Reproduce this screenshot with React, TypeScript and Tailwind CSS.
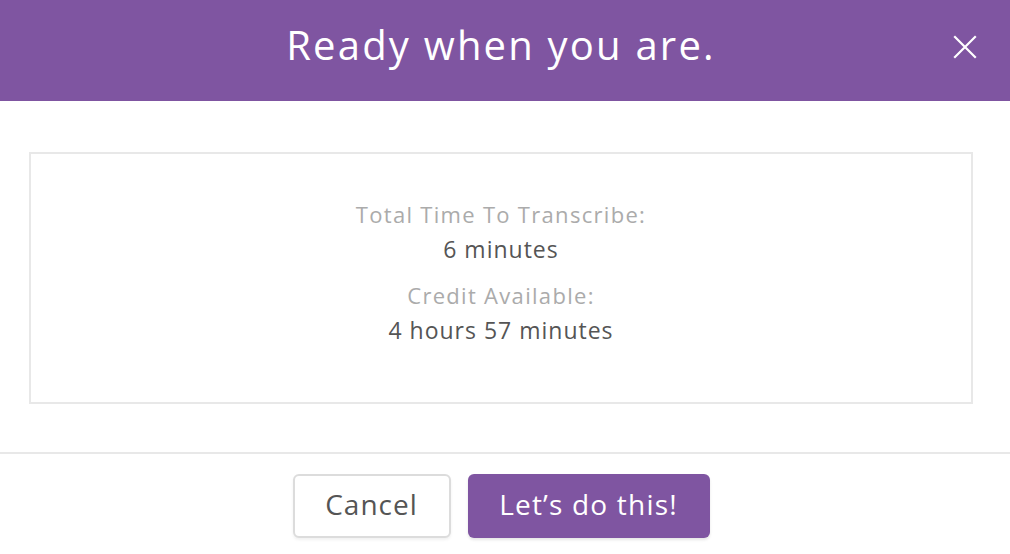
export default function App() {
  return (
    <div className="w-[1010px] h-[554px] bg-white overflow-hidden" style={{ fontFamily: '"Open Sans", "Liberation Sans", sans-serif' }}>
      <div className="relative h-[101px] bg-[#7f55a1] flex items-center justify-center pb-[12px] pr-[8px]">
        <h1 className="text-[40px] text-white tracking-[2.2px]">Ready when you are.</h1>
        <button className="absolute right-[31px] top-[33px] w-[28px] h-[28px] flex items-center justify-center">
          <svg width="24" height="24" viewBox="0 0 24 24" fill="none" stroke="white" strokeWidth="2.2" strokeLinecap="square">
            <path d="M2 2 L22 22 M22 2 L2 22" />
          </svg>
        </button>
      </div>

      <div className="pl-[29px] pr-[37px] pt-[51px] pb-[48px]">
        <div className="h-[252px] border-2 border-[#e8e8e8] flex flex-col items-center pt-[45px]">
          <p className="text-[22px] text-[#ababab] leading-[30px] tracking-[1.3px]">Total Time To Transcribe:</p>
          <p className="text-[23px] text-[#555] font-medium leading-[30px] mt-[5px] tracking-[1px]">6 minutes</p>
          <p className="text-[22px] text-[#ababab] leading-[30px] mt-[16px] tracking-[1.3px]">Credit Available:</p>
          <p className="text-[23px] text-[#555] font-medium leading-[30px] mt-[5px] tracking-[1px]">4 hours 57 minutes</p>
        </div>
      </div>

      <div className="border-t-2 border-[#e8e8e8] flex justify-center gap-[17px] pt-[20px] pr-[8px]">
        <button className="w-[158px] h-[64px] border-2 border-[#dcdcdc] rounded-[6px] bg-white text-[28px] text-[#555] tracking-[1px] pb-[5px] shadow-[0_2px_3px_rgba(0,0,0,0.06)]">
          Cancel
        </button>
        <button className="w-[242px] h-[64px] rounded-[6px] bg-[#7f55a1] text-[28px] text-white tracking-[1.2px] pb-[5px] shadow-[0_2px_3px_rgba(0,0,0,0.1)]">
          Let’s do this!
        </button>
      </div>
    </div>
  )
}
